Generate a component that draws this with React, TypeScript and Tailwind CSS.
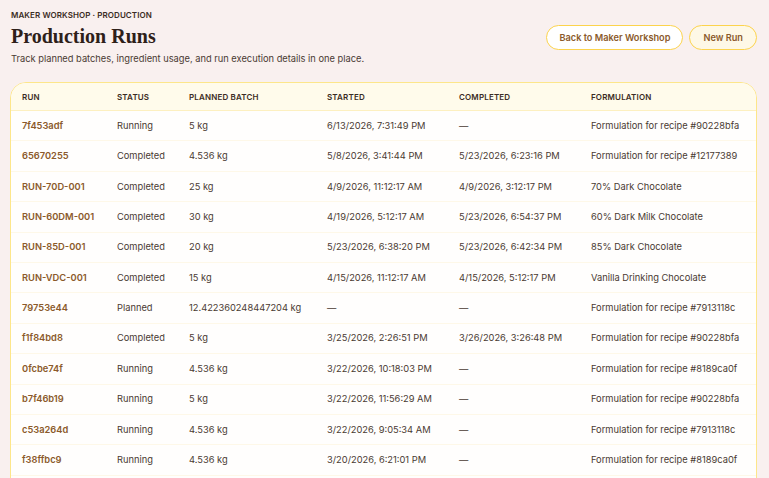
import React from "react";

type Row = { run: string; status: string; batch: string; started: string; completed: string; formulation: string };

const rows: Row[] = [
  { run: "7f453adf", status: "Running", batch: "5 kg", started: "6/13/2026, 7:31:49 PM", completed: "—", formulation: "Formulation for recipe #90228bfa" },
  { run: "65670255", status: "Completed", batch: "4.536 kg", started: "5/8/2026, 3:41:44 PM", completed: "5/23/2026, 6:23:16 PM", formulation: "Formulation for recipe #12177389" },
  { run: "RUN-70D-001", status: "Completed", batch: "25 kg", started: "4/9/2026, 11:12:17 AM", completed: "4/9/2026, 3:12:17 PM", formulation: "70% Dark Chocolate" },
  { run: "RUN-60DM-001", status: "Completed", batch: "30 kg", started: "4/19/2026, 5:12:17 AM", completed: "5/23/2026, 6:54:37 PM", formulation: "60% Dark Milk Chocolate" },
  { run: "RUN-85D-001", status: "Completed", batch: "20 kg", started: "5/23/2026, 6:38:20 PM", completed: "5/23/2026, 6:42:34 PM", formulation: "85% Dark Chocolate" },
  { run: "RUN-VDC-001", status: "Completed", batch: "15 kg", started: "4/15/2026, 11:12:17 AM", completed: "4/15/2026, 5:12:17 PM", formulation: "Vanilla Drinking Chocolate" },
  { run: "79753e44", status: "Planned", batch: "12.422360248447204 kg", started: "—", completed: "—", formulation: "Formulation for recipe #7913118c" },
  { run: "f1f84bd8", status: "Completed", batch: "5 kg", started: "3/25/2026, 2:26:51 PM", completed: "3/26/2026, 3:26:48 PM", formulation: "Formulation for recipe #90228bfa" },
  { run: "0fcbe74f", status: "Running", batch: "4.536 kg", started: "3/22/2026, 10:18:03 PM", completed: "—", formulation: "Formulation for recipe #8189ca0f" },
  { run: "b7f46b19", status: "Running", batch: "5 kg", started: "3/22/2026, 11:56:29 AM", completed: "—", formulation: "Formulation for recipe #90228bfa" },
  { run: "c53a264d", status: "Running", batch: "4.536 kg", started: "3/22/2026, 9:05:34 AM", completed: "—", formulation: "Formulation for recipe #7913118c" },
  { run: "f38ffbc9", status: "Running", batch: "4.536 kg", started: "3/20/2026, 6:21:01 PM", completed: "—", formulation: "Formulation for recipe #8189ca0f" },
];

const grid = "grid grid-cols-[95px_72px_138px_132px_132px_1fr] px-[11px] items-center";

export default function App() {
  return (
    <div
      className="h-[478px] overflow-hidden bg-[#f9f0ef] pl-[10px] pr-[12px] text-[#3b2c24]"
      style={{ fontFamily: "Inter, 'Noto Sans', sans-serif" }}
    >
      <div className="flex items-start justify-between pl-[1px] pt-[10px]">
        <div className="flex flex-col">
          <div className="text-[8px] font-semibold uppercase leading-[10px] tracking-[0.01em] text-[#3b2c24]">
            Maker Workshop · Production
          </div>
          <h1
            className="mt-[4px] text-[20px] font-bold leading-[24px] text-[#2e2019]"
            style={{ fontFamily: "'Liberation Serif', 'Times New Roman', serif" }}
          >
            Production Runs
          </h1>
          <p className="mt-[5px] text-[9.3px] leading-[12px] text-[#4a3a32]">
            Track planned batches, ingredient usage, and run execution details in one place.
          </p>
        </div>
        <div className="mt-[15px] flex gap-[6px]">
          <button className="h-[25px] rounded-full border border-[#fcd34d] bg-white px-[12px] text-[9.2px] font-semibold text-[#8b5a2b]">
            Back to Maker Workshop
          </button>
          <button className="h-[25px] rounded-full border border-[#fcd34d] bg-[#fef8e6] px-[13px] text-[9.2px] font-semibold text-[#8b5a2b]">
            New Run
          </button>
        </div>
      </div>

      <div className="mt-[17px] h-[420px] overflow-hidden rounded-t-[16px] border border-[#fde68a] bg-[#fffefd]">
        <div className={`${grid} h-[28px] border-b border-[#fdf0c0] bg-[#fffbeb] text-[8px] font-semibold uppercase tracking-[0.02em] text-[#3b2c24]`}>
          <div>Run</div>
          <div>Status</div>
          <div>Planned Batch</div>
          <div>Started</div>
          <div>Completed</div>
          <div>Formulation</div>
        </div>
        {rows.map((r) => (
          <div key={r.run} className={`${grid} h-[30.4px] border-b border-[#fef8e8] text-[9.3px] text-[#4a3a32]`}>
            <div className="font-semibold text-[#8b5a2b]">{r.run}</div>
            <div>{r.status}</div>
            <div>{r.batch}</div>
            <div>{r.started}</div>
            <div>{r.completed}</div>
            <div className="whitespace-nowrap">{r.formulation}</div>
          </div>
        ))}
      </div>
    </div>
  );
}
